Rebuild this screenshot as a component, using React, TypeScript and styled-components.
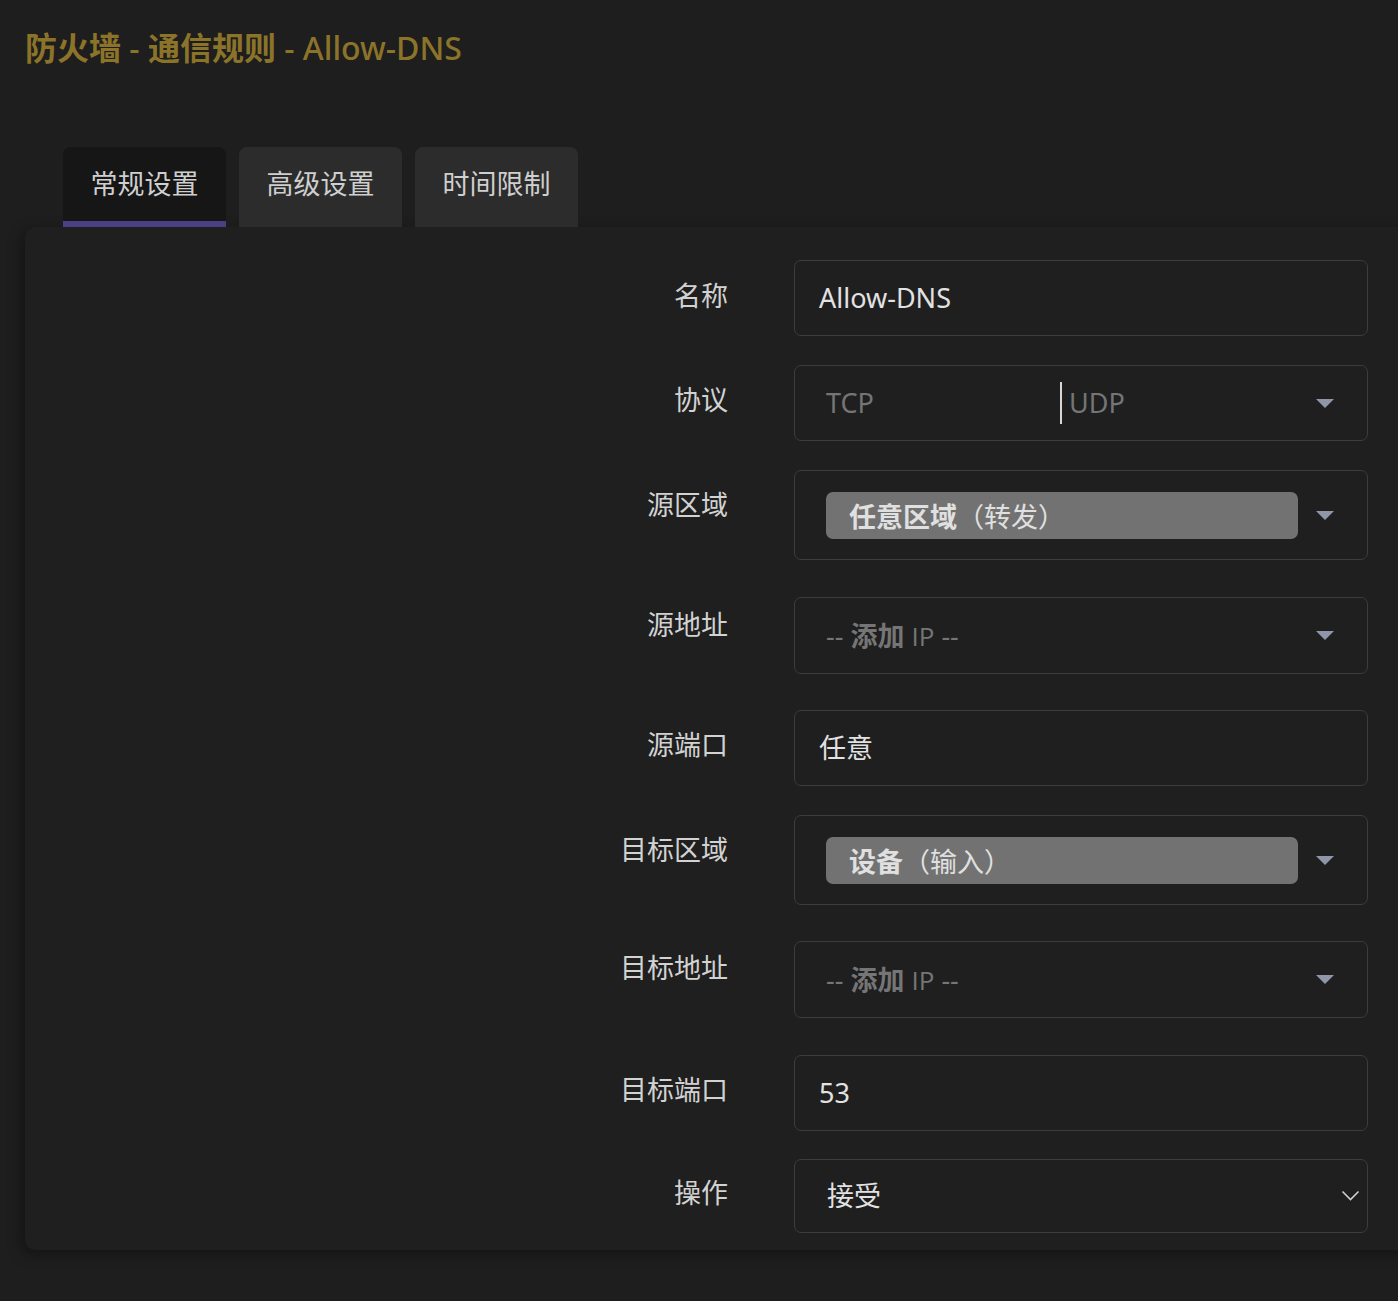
import React from "react";
import styled, { createGlobalStyle } from "styled-components";

const Global = createGlobalStyle`
  html, body { margin: 0; padding: 0; background: #1e1e1e; overflow-x: hidden; }
  body { font-family: "Noto Sans", "Noto Sans CJK SC", sans-serif; color: #d4d4d4; }
`;

const Page = styled.div`
  padding: 28px 0 50px 25px;
`;

const Title = styled.h1`
  margin: 0;
  font-size: 32px;
  line-height: 40px;
  font-weight: 700;
  color: #8b7329;
  white-space: nowrap;
`;

const TitleLatin = styled.span`
  font-weight: 500;
  font-size: 32px;
`;

const Tabs = styled.div`
  display: flex;
  gap: 13px;
  margin: 79px 0 0 38px;
`;

const Tab = styled.div<{ $active?: boolean }>`
  width: 163px;
  height: 80px;
  box-sizing: border-box;
  padding-top: 17px;
  text-align: center;
  font-size: 27px;
  line-height: 40px;
  color: #cfcfcf;
  border-radius: 8px 8px 0 0;
  background: ${(p) => (p.$active ? "#161616" : "#2c2c2c")};
  border-bottom: 6px solid ${(p) => (p.$active ? "#4b3f86" : "transparent")};
`;

const Card = styled.div`
  margin-right: -40px;
  background: #1f1f1f;
  border-radius: 10px;
  box-shadow: -4px 4px 14px rgba(0, 0, 0, 0.35);
  padding: 33px 0 17px;
`;

const Row = styled.div<{ $mt: number }>`
  display: flex;
  align-items: flex-start;
  gap: 66px;
  margin-top: ${(p) => p.$mt}px;
`;

const Label = styled.div<{ $pt: number }>`
  width: 703px;
  flex: none;
  text-align: right;
  font-size: 27px;
  line-height: 40px;
  color: #d2d2d2;
  padding-top: ${(p) => p.$pt}px;
`;

const Field = styled.div<{ $h: number; $pl: number }>`
  width: 574px;
  height: ${(p) => p.$h}px;
  box-sizing: border-box;
  border: 1.5px solid #3c3c3c;
  border-radius: 7px;
  background: #1f1f1f;
  display: flex;
  align-items: center;
  padding-left: ${(p) => p.$pl}px;
`;

const Value = styled.span`
  font-size: 27px;
  color: #e2e2e2;
  line-height: 40px;
`;

const Placeholder = styled.span<{ $w?: number }>`
  font-size: 27px;
  line-height: 40px;
  color: #757575;
  width: ${(p) => (p.$w ? `${p.$w}px` : "auto")};
  flex: none;
`;

const PlaceholderStrong = styled.span`
  font-weight: 700;
`;

const PlaceholderLatin = styled.span`
  font-family: "Open Sans", "Noto Sans", sans-serif;
  font-size: 26px;
`;

const Caret = styled.span`
  width: 2px;
  height: 42px;
  background: #d8d8d8;
  flex: none;
  margin-right: 7px;
`;

const Chip = styled.div`
  width: 472px;
  height: 47px;
  box-sizing: border-box;
  background: #727272;
  border-radius: 7px;
  padding-left: 23px;
  display: flex;
  align-items: center;
  font-size: 27px;
  color: #e0e0e0;
`;

const ChipStrong = styled.span`
  font-weight: 700;
`;

const Spacer = styled.div`
  flex: 1;
`;

const Triangle = styled.div`
  width: 0;
  height: 0;
  border-left: 9px solid transparent;
  border-right: 9px solid transparent;
  border-top: 9px solid #8e96a8;
  margin-right: 33px;
  margin-left: 17px;
  flex: none;
`;

const Chevron = () => (
  <svg width="19" height="12" viewBox="0 0 19 12" style={{ marginRight: 7, flex: "none" }}>
    <polyline points="1.5,1.5 9.5,9.5 17.5,1.5" fill="none" stroke="#cfcfcf" strokeWidth="1.6" />
  </svg>
);

const AddIp = () => (
  <Placeholder>
    -- <PlaceholderStrong>添加</PlaceholderStrong> <PlaceholderLatin>IP</PlaceholderLatin> --
  </Placeholder>
);

export default function App() {
  return (
    <Page>
      <Global />
      <Title>
        防火墙 <TitleLatin>-</TitleLatin> 通信规则 <TitleLatin>- Allow-DNS</TitleLatin>
      </Title>
      <Tabs>
        <Tab $active>常规设置</Tab>
        <Tab>高级设置</Tab>
        <Tab>时间限制</Tab>
      </Tabs>
      <Card>
        <Row $mt={0}>
          <Label $pt={16}>名称</Label>
          <Field $h={76} $pl={24}>
            <Value>Allow-DNS</Value>
          </Field>
        </Row>
        <Row $mt={29}>
          <Label $pt={15}>协议</Label>
          <Field $h={76} $pl={31}>
            <Placeholder $w={234}>TCP</Placeholder>
            <Caret />
            <Placeholder>UDP</Placeholder>
            <Spacer />
            <Triangle />
          </Field>
        </Row>
        <Row $mt={29}>
          <Label $pt={15}>源区域</Label>
          <Field $h={90} $pl={31}>
            <Chip>
              <ChipStrong>任意区域</ChipStrong>（转发）
            </Chip>
            <Spacer />
            <Triangle />
          </Field>
        </Row>
        <Row $mt={37}>
          <Label $pt={8}>源地址</Label>
          <Field $h={77} $pl={31}>
            <AddIp />
            <Spacer />
            <Triangle />
          </Field>
        </Row>
        <Row $mt={36}>
          <Label $pt={15}>源端口</Label>
          <Field $h={76} $pl={24}>
            <Value>任意</Value>
          </Field>
        </Row>
        <Row $mt={29}>
          <Label $pt={15}>目标区域</Label>
          <Field $h={90} $pl={31}>
            <Chip>
              <ChipStrong>设备</ChipStrong>（输入）
            </Chip>
            <Spacer />
            <Triangle />
          </Field>
        </Row>
        <Row $mt={36}>
          <Label $pt={7}>目标地址</Label>
          <Field $h={77} $pl={31}>
            <AddIp />
            <Spacer />
            <Triangle />
          </Field>
        </Row>
        <Row $mt={37}>
          <Label $pt={15}>目标端口</Label>
          <Field $h={76} $pl={24}>
            <Value>53</Value>
          </Field>
        </Row>
        <Row $mt={28}>
          <Label $pt={14}>操作</Label>
          <Field $h={74} $pl={32}>
            <Value>接受</Value>
            <Spacer />
            <Chevron />
          </Field>
        </Row>
      </Card>
    </Page>
  );
}
